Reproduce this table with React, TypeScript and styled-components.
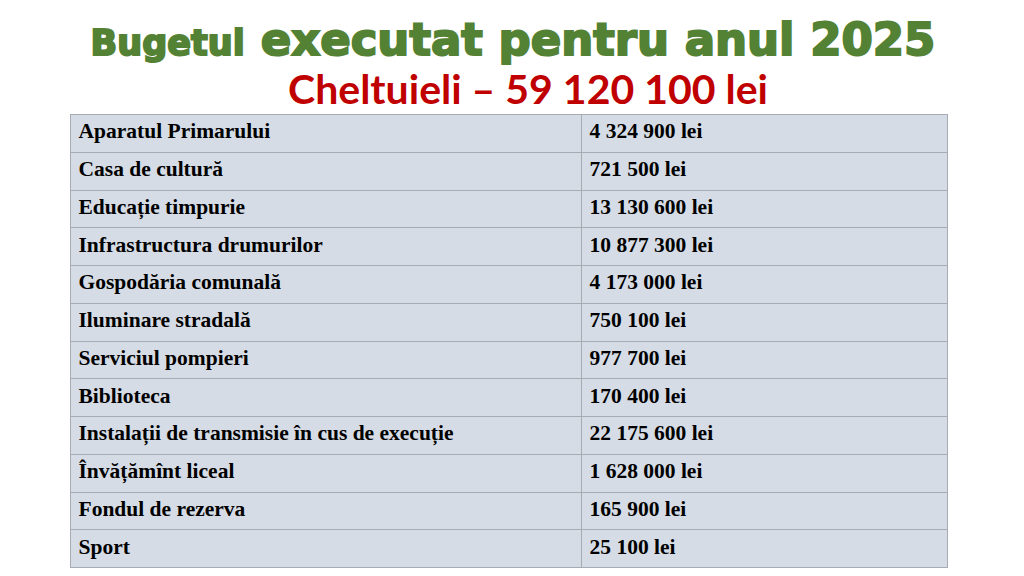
import React from "react";
import styled, { createGlobalStyle } from "styled-components";

const GlobalStyle = createGlobalStyle`
  html, body { margin: 0; padding: 0; background: #ffffff; }
  body { width: 1024px; height: 576px; overflow: hidden; }
`;

const Slide = styled.main`
  width: 1024px;
  height: 576px;
  display: flex;
  flex-direction: column;
  align-items: center;
  box-sizing: border-box;
  padding-top: 16px;
`;

const Title = styled.h1`
  margin: 0;
  display: flex;
  align-items: baseline;
  gap: 16px;
  color: #548235;
  font-family: "DejaVu Sans", Inter, sans-serif;
  font-weight: 700;
  line-height: 48px;
  height: 48px;
  padding-left: 2px;
  -webkit-text-stroke: 2px #548235;
`;

const TitleSmall = styled.span`
  font-size: 35px;
`;

const TitleBig = styled.span`
  font-size: 45px;
`;

const Subtitle = styled.h2`
  margin: 0;
  color: #c00000;
  font-family: Lato, "Open Sans", sans-serif;
  font-weight: 700;
  font-size: 41px;
  line-height: 50px;
  height: 50px;
  padding-left: 32px;
`;

const Table = styled.table`
  border-collapse: collapse;
  width: 877px;
  margin-right: 7px;
  table-layout: fixed;
  font-family: "Liberation Serif", "Times New Roman", serif;
  font-weight: 700;
  font-size: 21.5px;
  color: #000000;
`;

const Row = styled.tr`
  height: 37.75px;
`;

const Cell = styled.td<{ $w: number }>`
  width: ${(p) => p.$w}px;
  background: #d6dce5;
  border: 1px solid #a7abb2;
  padding: 0 0 3px 8px;
  box-sizing: border-box;
  white-space: nowrap;
`;

const rows: [string, string][] = [
  ["Aparatul Primarului", "4 324 900 lei"],
  ["Casa de cultură", "721 500 lei"],
  ["Educație timpurie", "13 130 600 lei"],
  ["Infrastructura drumurilor", "10 877 300 lei"],
  ["Gospodăria comunală", "4 173 000 lei"],
  ["Iluminare stradală", "750 100 lei"],
  ["Serviciul pompieri", "977 700 lei"],
  ["Biblioteca", "170 400 lei"],
  ["Instalații de transmisie în cus de execuție", "22 175 600 lei"],
  ["Învățămînt liceal", "1 628 000 lei"],
  ["Fondul de rezerva", "165 900 lei"],
  ["Sport", "25 100 lei"],
];

export default function App() {
  return (
    <>
      <GlobalStyle />
      <Slide>
        <Title>
          <TitleSmall>Bugetul</TitleSmall>
          <TitleBig>executat pentru anul 2025</TitleBig>
        </Title>
        <Subtitle>Cheltuieli – 59 120 100 lei</Subtitle>
        <Table>
          <tbody>
            {rows.map(([name, value]) => (
              <Row key={name}>
                <Cell $w={511}>{name}</Cell>
                <Cell $w={366}>{value}</Cell>
              </Row>
            ))}
          </tbody>
        </Table>
      </Slide>
    </>
  );
}
